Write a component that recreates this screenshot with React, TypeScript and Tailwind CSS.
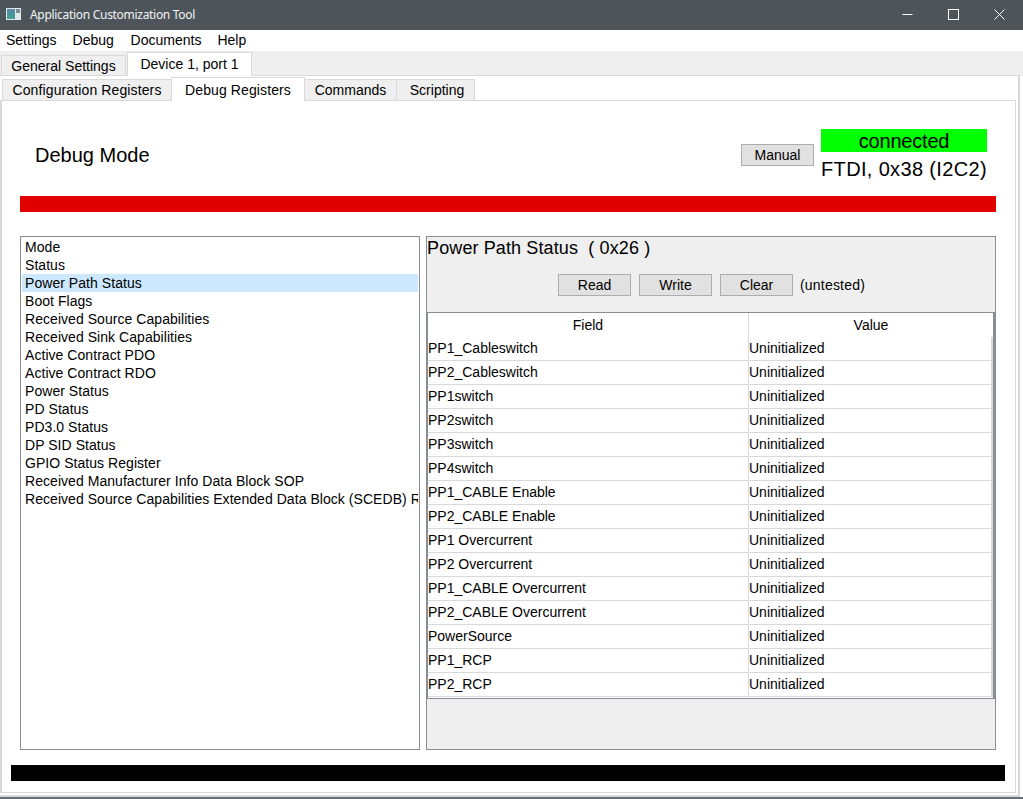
const registers = [
  'Mode',
  'Status',
  'Power Path Status',
  'Boot Flags',
  'Received Source Capabilities',
  'Received Sink Capabilities',
  'Active Contract PDO',
  'Active Contract RDO',
  'Power Status',
  'PD Status',
  'PD3.0 Status',
  'DP SID Status',
  'GPIO Status Register',
  'Received Manufacturer Info Data Block SOP',
  'Received Source Capabilities Extended Data Block (SCEDB) Register',
]

const fields = [
  'PP1_Cableswitch',
  'PP2_Cableswitch',
  'PP1switch',
  'PP2switch',
  'PP3switch',
  'PP4switch',
  'PP1_CABLE Enable',
  'PP2_CABLE Enable',
  'PP1 Overcurrent',
  'PP2 Overcurrent',
  'PP1_CABLE Overcurrent',
  'PP2_CABLE Overcurrent',
  'PowerSource',
  'PP1_RCP',
  'PP2_RCP',
]

function AppIcon() {
  return (
    <svg width="15" height="12" viewBox="0 0 15 12" className="-mt-[2px] shrink-0">
      <defs>
        <linearGradient id="panel" x1="0" y1="0" x2="0" y2="1">
          <stop offset="0" stopColor="#5b86a8" />
          <stop offset="1" stopColor="#3fa38f" />
        </linearGradient>
      </defs>
      <rect width="15" height="12" fill="#e4e8ea" />
      <rect x="1" y="1" width="8" height="10" fill="url(#panel)" />
      <rect x="10" y="1" width="4" height="4" fill="#7b8d98" />
    </svg>
  )
}

function WindowButtons() {
  return (
    <div className="flex h-full pb-px pr-px">
      <div className="flex w-[45px] items-center justify-center">
        <svg width="11" height="11" viewBox="0 0 11 11"><path d="M0.5 5.5H10.5" stroke="#fff" strokeWidth="1" /></svg>
      </div>
      <div className="flex w-[46px] items-center justify-center">
        <svg width="11" height="11" viewBox="0 0 11 11" fill="none"><rect x="0.5" y="0.5" width="10" height="10" stroke="#fff" strokeWidth="1" /></svg>
      </div>
      <div className="flex w-[46px] items-center justify-center">
        <svg width="11" height="11" viewBox="0 0 11 11" fill="none"><path d="M0.5 0.5L10.5 10.5M10.5 0.5L0.5 10.5" stroke="#fff" strokeWidth="1" /></svg>
      </div>
    </div>
  )
}

function OuterTabs() {
  return (
    <div className="flex h-[25px] items-end bg-[#efefef] pl-px">
      <div className="mr-px flex h-[21px] w-[125px] items-center justify-center border border-b-0 border-[#d9d9d9] bg-[#efefef] pb-px text-sm">General Settings</div>
      <div className="relative z-10 flex h-[24px] w-[125px] items-center justify-center border border-b-0 border-[#d9d9d9] bg-white pb-px text-sm">Device 1, port 1</div>
    </div>
  )
}

function InnerTabs() {
  const cls = 'flex h-[22px] items-center justify-center border border-[#d9d9d9] bg-[#efefef] text-sm'
  return (
    <div className="flex h-[25px] items-end pl-[2px]">
      <div className={cls + ' w-[170px] tracking-[0.12px]'}>Configuration Registers</div>
      <div className="relative z-10 -ml-px flex h-[24px] w-[134px] items-center justify-center border border-b-0 border-[#d9d9d9] bg-white text-sm tracking-[0.1px]">Debug Registers</div>
      <div className={cls + ' -ml-px w-[93px]'}>Commands</div>
      <div className={cls + ' -ml-px w-[79px] pl-[3px]'}>Scripting</div>
    </div>
  )
}

function GrayButton({ label }: { label: string }) {
  return (
    <div className="flex h-[22px] w-[73px] items-center justify-center border border-[#adadad] bg-[#e1e1e1] text-sm">
      {label}
    </div>
  )
}

function RegisterList() {
  return (
    <div className="h-[514px] w-[400px] shrink-0 overflow-hidden border border-[#8a8d94] bg-white pl-px pt-px">
      {registers.map((r, i) => (
        <div
          key={r}
          className={(i === 2 ? 'bg-[#cce8ff] ' : '') + 'h-[18px] w-[396px] overflow-hidden whitespace-nowrap pl-[3px] text-sm leading-[18px] tracking-[0.05px]'}
        >
          {r}
        </div>
      ))}
    </div>
  )
}

function FieldTable() {
  return (
    <div className="h-[387px] border border-r-2 border-[#8a8d94] bg-white">
      <div className="flex h-[24px] text-sm leading-[24px]">
        <div className="w-[321px] border-r border-[#d9d9d9] text-center">Field</div>
        <div className="flex-1 text-center">Value</div>
      </div>
      {fields.map((f) => (
        <div key={f} className="flex h-[24px] border-b border-[#d9d9d9] text-sm leading-[22px]">
          <div className="w-[321px] border-r border-[#d9d9d9]">{f}</div>
          <div className="flex-1 border-r-2 border-[#d9d9d9]">Uninitialized</div>
        </div>
      ))}
    </div>
  )
}

function DetailPanel() {
  return (
    <div className="h-[514px] w-[570px] shrink-0 border border-[#8a8d94] bg-[#efefef]">
      <div className="h-[22px] whitespace-pre text-[18px] leading-[22px] tracking-[0.12px]">Power Path Status  ( 0x26 )</div>
      <div className="flex h-[53px] items-start gap-2 pl-[131px] pt-[15px]">
        <GrayButton label="Read" />
        <GrayButton label="Write" />
        <GrayButton label="Clear" />
        <span className="-ml-px h-[22px] text-sm leading-[22px] tracking-[0.2px]">(untested)</span>
      </div>
      <FieldTable />
    </div>
  )
}

export default function App() {
  return (
    <div className="flex h-[799px] w-[1023px] flex-col overflow-hidden bg-white font-['Liberation_Sans',Arial,sans-serif] text-[#000]">
      <div className="flex h-[30px] items-center justify-between bg-[#4d555a] pl-[6px] text-white">
        <div className="flex items-center gap-[9px]">
          <AppIcon />
          <span className="font-['Noto_Sans',sans-serif] text-xs tracking-[-0.3px] text-[#f2f2f2]">Application Customization Tool</span>
        </div>
        <WindowButtons />
      </div>

      <div className="flex h-[21px] items-center gap-[16px] pb-px pl-[6px] text-sm">
        <span>Settings</span>
        <span className="w-[42px]">Debug</span>
        <span>Documents</span>
        <span>Help</span>
      </div>

      <OuterTabs />

      <div className="-mt-px h-[722px] w-[1020px] border-b-2 border-r-2 border-t border-[#d9d9d9] bg-white">
        <InnerTabs />
        <div className="-mt-px h-[693px] w-[1016px] border border-l-2 border-[#d9d9d9] bg-white pt-[25px]">
          <div className="flex h-[70px] items-start pl-[18px]">
            <div className="flex-1 pl-[15px] pt-[17px] text-[20px] leading-[24px]">Debug Mode</div>
            <div className="mr-[7px] mt-[18px]">
              <div className="flex h-[22px] w-[73px] items-center justify-center border border-[#adadad] bg-[#e1e1e1] text-sm">Manual</div>
            </div>
            <div className="mr-[28px] mt-[3px] w-[166px]">
              <div className="flex h-[23px] items-center justify-center bg-[#00ff00] text-[20px] tracking-[-0.2px]">connected</div>
              <div className="mt-[5px] whitespace-nowrap text-[20px] leading-[24px] tracking-[0.35px]">FTDI, 0x38 (I2C2)</div>
            </div>
          </div>

          <div className="ml-[18px] h-[16px] w-[976px] bg-[#e00000]" />

          <div className="ml-[18px] mt-[24px] flex gap-[6px]">
            <RegisterList />
            <DetailPanel />
          </div>

          <div className="ml-[9px] mt-[15px] h-[16px] w-[994px] bg-black" />
        </div>
      </div>

      <div className="flex-1 border-t-2 border-[#6a7075]" />
    </div>
  )
}
